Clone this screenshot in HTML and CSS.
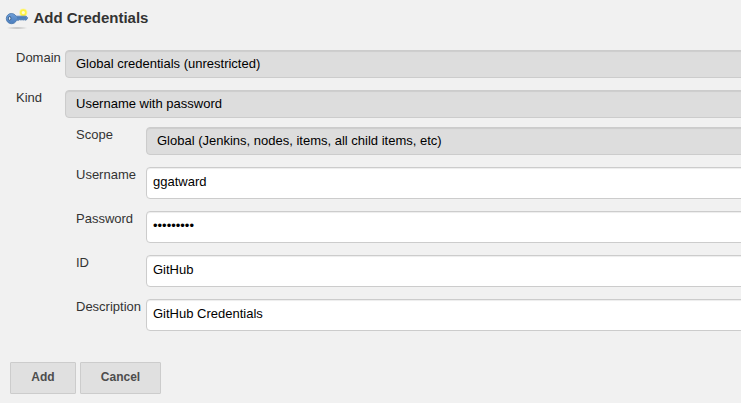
FILE: index.html
```html
<!DOCTYPE html>
<html lang="en">
<head>
<meta charset="utf-8">
<title>Add Credentials</title>
<link rel="stylesheet" href="styles.css">
</head>
<body>
<header class="heading">
  <svg class="key" width="24" height="24" viewBox="0 0 24 24" aria-hidden="true">
    <defs>
      <linearGradient id="steel" x1="0" y1="0" x2="0" y2="1"><stop offset="0" stop-color="#6f9fd8"/><stop offset="1" stop-color="#4a7dbd"/></linearGradient>
      <radialGradient id="shade"><stop offset="0" stop-color="#999" stop-opacity=".65"/><stop offset="1" stop-color="#999" stop-opacity="0"/></radialGradient>
    </defs>
    <ellipse cx="12" cy="21" rx="11" ry="1.5" fill="url(#shade)"/>
    <circle cx="18.3" cy="5.6" r="4.1" fill="#fff58a" opacity=".7"/>
    <circle cx="18.3" cy="5.6" r="2.5" fill="#fffcd0" stroke="#fff344" stroke-width="1.7"/>
    <path d="M6.3 6.5c2.2 0 3.8 1 4.7 2.7h10.2l1.5 1.7-1.5 2.2h-1.3l-.8-.7-1 .8-1.1-.8-1 .8-1.1-.8-1 .8h-2.4c-.8 2.3-2.6 3.5-5 3.5A5 5 0 0 1 1.3 11.6a5 5 0 0 1 5-5.1z" fill="url(#steel)" stroke="#4573a9" stroke-width=".8"/>
    <path d="M12 10.9h9" stroke="#36659c" stroke-width=".7"/>
    <ellipse cx="4.7" cy="11.4" rx="1.2" ry="2" fill="#e6edf5" stroke="#264b78" stroke-width=".8"/>
  </svg>
  <h1>Add Credentials</h1>
</header>
<form class="form">
  <div class="row"><label>Domain</label><div class="field select">Global credentials (unrestricted)</div></div>
  <div class="row"><label>Kind</label><div class="field select">Username with password</div></div>
  <div class="nested">
    <div class="row"><label>Scope</label><div class="field select">Global (Jenkins, nodes, items, all child items, etc)</div></div>
    <div class="row"><label>Username</label><input class="field" type="text" value="ggatward"></div>
    <div class="row"><label>Password</label><input class="field" type="password" value="ggatward1"></div>
    <div class="row"><label>ID</label><input class="field" type="text" value="GitHub"></div>
    <div class="row"><label>Description</label><input class="field" type="text" value="GitHub Credentials"></div>
  </div>
  <div class="actions"><button type="button" class="add">Add</button><button type="button" class="cancel">Cancel</button></div>
</form>
</body>
</html>
```
FILE: styles.css
```css
* { box-sizing: border-box; }
body {
  margin: 0;
  height: 403px;
  overflow: hidden;
  background: #f1f1f1;
  color: #333;
  font: 13px/15px "Liberation Sans", Arial, sans-serif;
}
.heading {
  display: flex;
  height: 50px;
  padding: 7px 0 0 5px;
}
.heading h1 {
  margin: 1px 0 0 4.4px;
  font-size: 15px;
  line-height: 20px;
}
.row {
  display: grid;
  grid-template-columns: 49px 700px;
  margin: 0 0 12px 16px;
}
.row label { white-space: nowrap; }
.field {
  width: 100%;
  height: 32px;
  padding: 6px 6px 10px;
  border: 1px solid #ccc;
  border-radius: 4px;
  background: #fff;
  box-shadow: inset 0 1px 1px rgba(0, 0, 0, .075);
  color: #000;
  font: inherit;
}
.select {
  height: 28px;
  padding: 5px 10px;
  background: #ddd;
}
.nested { margin-top: -3px; }
.nested .row {
  grid-template-columns: 70px 620px;
  margin-left: 76px;
}
.actions {
  display: flex;
  gap: 4px;
  padding: 19px 0 0 10px;
}
.actions button {
  height: 32px;
  padding: 0 0 2px;
  border: 1px solid #ccc;
  border-radius: 1px;
  background: #e0e0e0;
  color: #4d4d4d;
  font: bold 12px/15px "Liberation Sans", Arial, sans-serif;
}
.actions .add { width: 66px; }
.actions .cancel { width: 81px; }
```
